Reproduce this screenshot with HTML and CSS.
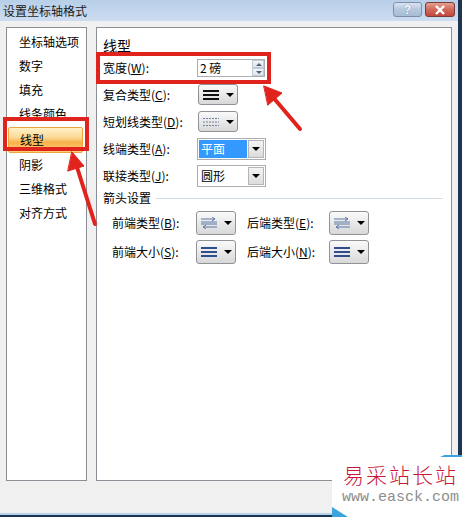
FILE: index.html
```html
<!DOCTYPE html>
<html>
<head>
  <title>设置坐标轴格式</title>
  <link rel="stylesheet" href="styles.css">
</head>
<body>
  <div class="window">
    <div class="titlebar">
      <span class="title">设置坐标轴格式</span>
      <div class="caption-btns">
        <span class="btn-help">?</span>
        <span class="btn-close">
          <svg width="12" height="10" viewBox="0 0 12 10"><path d="M2 1 L10 9 M10 1 L2 9" stroke="#fff" stroke-width="2.4"/></svg>
        </span>
      </div>
    </div>

    <div class="content">
      <ul class="nav">
        <li>坐标轴选项</li>
        <li>数字</li>
        <li>填充</li>
        <li>线条颜色</li>
        <li class="active">线型</li>
        <li>阴影</li>
        <li>三维格式</li>
        <li>对齐方式</li>
      </ul>

      <div class="pane">
        <h2>线型</h2>
        <div class="row">
          <span class="label">宽度(<u>W</u>):</span>
          <div class="spin">
            <span class="spin-value">2 磅</span>
            <span class="spin-btns">
              <i class="spin-up"></i>
              <i class="spin-down"></i>
            </span>
          </div>
        </div>
        <div class="row">
          <span class="label">复合类型(<u>C</u>):</span>
          <span class="pick">
            <svg width="16" height="10" viewBox="0 0 16 10"><rect x="0" y="0" width="16" height="2" fill="#111"/><rect x="0" y="4" width="16" height="2" fill="#111"/><rect x="0" y="8" width="16" height="2" fill="#111"/></svg>
            <i class="caret"></i>
          </span>
        </div>
        <div class="row">
          <span class="label">短划线类型(<u>D</u>):</span>
          <span class="pick">
            <svg width="16" height="10" viewBox="0 0 16 10"><path d="M0 1.5 H16 M0 5 H16 M0 8.5 H16" stroke="#6f80a2" stroke-width="1" stroke-dasharray="2 1"/></svg>
            <i class="caret"></i>
          </span>
        </div>
        <div class="row">
          <span class="label">线端类型(<u>A</u>):</span>
          <div class="select">
            <span class="select-value selected">平面</span>
            <span class="select-btn"><i class="caret"></i></span>
          </div>
        </div>
        <div class="row">
          <span class="label">联接类型(<u>J</u>):</span>
          <div class="select">
            <span class="select-value">圆形</span>
            <span class="select-btn"><i class="caret"></i></span>
          </div>
        </div>

        <div class="group-title">
          <span>箭头设置</span>
          <span class="sep"></span>
        </div>

        <div class="arrow-row">
          <span class="label-sm">前端类型(<u>B</u>):</span>
          <span class="pick">
            <svg width="16" height="12" viewBox="0 0 16 12"><path d="M0 2 H14 M11 0 L14 2 L11 4 M0 5 H16 M0 7 H16 M2 10 H16 M5 8 L2 10 L5 12" stroke="#5a77a6" stroke-width="1" fill="none"/></svg>
            <i class="caret"></i>
          </span>
          <span class="label-sm second">后端类型(<u>E</u>):</span>
          <span class="pick">
            <svg width="16" height="12" viewBox="0 0 16 12"><path d="M0 2 H14 M11 0 L14 2 L11 4 M0 5 H16 M0 7 H16 M2 10 H16 M5 8 L2 10 L5 12" stroke="#5a77a6" stroke-width="1" fill="none"/></svg>
            <i class="caret"></i>
          </span>
        </div>
        <div class="arrow-row">
          <span class="label-sm">前端大小(<u>S</u>):</span>
          <span class="pick">
            <svg width="16" height="10" viewBox="0 0 16 10"><rect x="0" y="0" width="16" height="2" fill="#2f4f8c"/><rect x="0" y="4" width="16" height="2" fill="#2f4f8c"/><rect x="0" y="8" width="16" height="2" fill="#2f4f8c"/></svg>
            <i class="caret"></i>
          </span>
          <span class="label-sm second">后端大小(<u>N</u>):</span>
          <span class="pick">
            <svg width="16" height="10" viewBox="0 0 16 10"><rect x="0" y="0" width="16" height="2" fill="#2f4f8c"/><rect x="0" y="4" width="16" height="2" fill="#2f4f8c"/><rect x="0" y="8" width="16" height="2" fill="#2f4f8c"/></svg>
            <i class="caret"></i>
          </span>
        </div>
      </div>
    </div>

    <div class="frame-bottom"></div>

    <!-- annotations drawn over the dialog -->
    <div class="callout callout-nav"></div>
    <div class="callout callout-width"></div>
    <svg class="arrows" width="462" height="517" viewBox="0 0 462 517">
      <g stroke="#e0231c" stroke-width="4" fill="#e0231c" stroke-linecap="round">
        <line x1="300" y1="129" x2="272" y2="96"/>
        <polygon points="264,86 282,93 268,105" stroke-width="1"/>
        <line x1="95" y1="224" x2="76" y2="164"/>
        <polygon points="72,152 84,166 68,171" stroke-width="1"/>
      </g>
    </svg>

    <div class="watermark">
      <svg class="wm-corners" width="130" height="62" viewBox="0 0 130 62">
        <polygon points="108,2 130,-8 130,2" fill="#3ba3dd"/>
        <polygon points="0,52 16,62 0,62" fill="#3ba3dd"/>
      </svg>
      <div class="wm-name">易采站长站</div>
      <div class="wm-url">www.easck.com</div>
    </div>
  </div>
</body>
</html>
```

FILE: styles.css
```css
/* Global styles */
body {
  margin: 0;
  padding: 0;
  background-color: #1d3550;
  font-family: "Noto Sans CJK SC", sans-serif;
  font-size: 12px;
  color: #000;
}

.window {
  position: relative;
  width: 462px;
  height: 517px;
  box-sizing: border-box;
  border-right: 4px solid #1d3550;
  background-color: #f0f0f0;
  display: flex;
  flex-direction: column;
}

/* Title bar */
.titlebar {
  height: 21px;
  display: flex;
  align-items: center;
  justify-content: space-between;
  background: linear-gradient(#b8cfe9, #cddcf0);
  padding: 0 3px 0 3px;
  flex-shrink: 0;
}

.title {
  font-size: 12px;
  line-height: 14px;
  color: #1b1b1b;
  padding-top: 1px;
}

.caption-btns {
  display: flex;
  gap: 3px;
  align-self: flex-start;
  margin-top: 2px;
}

.btn-help,
.btn-close {
  width: 29px;
  height: 15px;
  border: 1px solid #7d8fa6;
  border-radius: 3px;
  display: flex;
  align-items: center;
  justify-content: center;
  box-sizing: border-box;
}

.btn-help {
  background: linear-gradient(#d9e4f1, #b5c7dd 50%, #a8bcd6);
  color: #fff;
  font-family: "Liberation Sans", sans-serif;
  font-weight: bold;
  font-size: 12px;
  line-height: 12px;
  text-shadow: 0 0 1px #4a5f7a;
}

.btn-close {
  width: 30px;
  border-color: #7a3a35;
  background: linear-gradient(#e6a193, #d1695a 50%, #c2453a);
}

/* Main area */
.content {
  display: flex;
  gap: 9px;
  padding: 6px 0 0 6px;
  height: 454px;
}

.nav {
  list-style: none;
  margin: 0;
  padding: 2px 0 0 0;
  width: 81px;
  height: 454px;
  box-sizing: border-box;
  background-color: #fff;
  border: 1px solid #8b8e95;
}

.nav li {
  height: 24px;
  line-height: 24px;
  padding-left: 12px;
}

.nav li.active {
  margin: 1px 3px 0 1px;
  padding-left: 11px;
  height: 24px;
  line-height: 23px;
  border: 1px solid #e9a73b;
  border-radius: 2px;
  background: linear-gradient(#fff1c9, #fcd895 40%, #f8b24c 60%, #fbcf7a);
}

.pane {
  width: 356px;
  height: 454px;
  box-sizing: border-box;
  background-color: #fff;
  border: 1px solid #8b8e95;
  padding-left: 6px;
}

.pane h2 {
  margin: 0;
  height: 26px;
  padding-top: 8px;
  box-sizing: border-box;
  font-size: 14px;
  line-height: 18px;
  font-weight: normal;
}

.row {
  height: 27px;
  display: flex;
  align-items: center;
}

.label {
  width: 94px;
  flex-shrink: 0;
}

u {
  text-decoration: underline;
}

/* Spinner */
.spin {
  width: 68px;
  height: 18px;
  box-sizing: border-box;
  border: 1px solid #abadb3;
  display: flex;
  align-items: center;
  justify-content: space-between;
  padding-left: 2px;
}

.spin-value {
  line-height: 16px;
}

.spin-btns {
  display: flex;
  flex-direction: column;
  width: 12px;
  height: 16px;
}

.spin-up,
.spin-down {
  flex: 1;
  border: 1px solid #c3cbd6;
  background: linear-gradient(#f3f6f9, #dde4ec);
  position: relative;
}

.spin-up::after,
.spin-down::after {
  content: "";
  position: absolute;
  left: 3px;
  top: 2px;
  border-left: 3px solid transparent;
  border-right: 3px solid transparent;
}

.spin-up::after {
  border-bottom: 3px solid #51607a;
}

.spin-down::after {
  border-top: 3px solid #51607a;
}

/* Line style picker buttons */
.pick {
  width: 40px;
  height: 21px;
  box-sizing: border-box;
  border: 1px solid #8f9296;
  border-radius: 3px;
  background: linear-gradient(#fafafa, #e9e9e9 50%, #d8d8d8);
  display: flex;
  align-items: center;
  padding-left: 4px;
  gap: 7px;
  margin-left: 1px;
}

.caret {
  display: block;
  width: 0;
  height: 0;
  border-left: 4px solid transparent;
  border-right: 4px solid transparent;
  border-top: 4px solid #000;
}

/* Dropdown */
.select {
  width: 69px;
  height: 22px;
  box-sizing: border-box;
  border: 1px solid #abadb3;
  display: flex;
  padding: 1px;
}

.select-value {
  flex: 1;
  line-height: 18px;
  padding-left: 2px;
}

.select-value.selected {
  background-color: #3399ff;
  color: #fff;
}

.select-btn {
  width: 16px;
  margin-left: 1px;
  box-sizing: border-box;
  border: 1px solid #b5b5b5;
  background: linear-gradient(#f5f5f5, #dcdcdc);
  display: flex;
  align-items: center;
  justify-content: center;
}

/* Arrow settings */
.group-title {
  height: 16px;
  display: flex;
  align-items: center;
  gap: 5px;
  line-height: 16px;
  margin-top: 1px;
}

.sep {
  flex: 1;
  height: 1px;
  background-color: #d5dde5;
  margin-right: 8px;
}

.arrow-row {
  height: 29px;
  display: flex;
  align-items: center;
  padding-left: 9px;
}

.group-title + .arrow-row {
  margin-top: 2px;
}

.label-sm {
  width: 84px;
  flex-shrink: 0;
}

.label-sm.second {
  width: 82px;
  margin-left: 11px;
}

.arrow-row .pick {
  height: 24px;
  margin-left: 0;
}

/* Window frame bottom */
.frame-bottom {
  margin-top: auto;
  height: 4px;
  border-top: 2px solid #b4d3e8;
  background-color: #1d3550;
  box-sizing: border-box;
}

/* Red annotations */
.callout {
  position: absolute;
  border: 4px solid #e0231c;
  box-sizing: border-box;
}

.callout-nav {
  left: 3px;
  top: 117px;
  width: 86px;
  height: 34px;
}

.callout-width {
  left: 96px;
  top: 52px;
  width: 175px;
  height: 32px;
}

.arrows {
  position: absolute;
  left: 0;
  top: 0;
}

/* Watermark */
.watermark {
  position: absolute;
  left: 332px;
  top: 455px;
  width: 130px;
  height: 62px;
  background-color: #fff;
}

.wm-corners {
  position: absolute;
  left: 0;
  top: 0;
}

.wm-name {
  position: absolute;
  left: 11px;
  top: 6px;
  font-size: 21px;
  line-height: 26px;
  letter-spacing: 2px;
  color: #c8173a;
  font-weight: 300;
  white-space: nowrap;
}

.wm-url {
  position: absolute;
  left: 10px;
  top: 34px;
  font-family: "Liberation Mono", monospace;
  font-size: 15px;
  line-height: 18px;
  color: #8d8d8d;
  white-space: nowrap;
}
```
